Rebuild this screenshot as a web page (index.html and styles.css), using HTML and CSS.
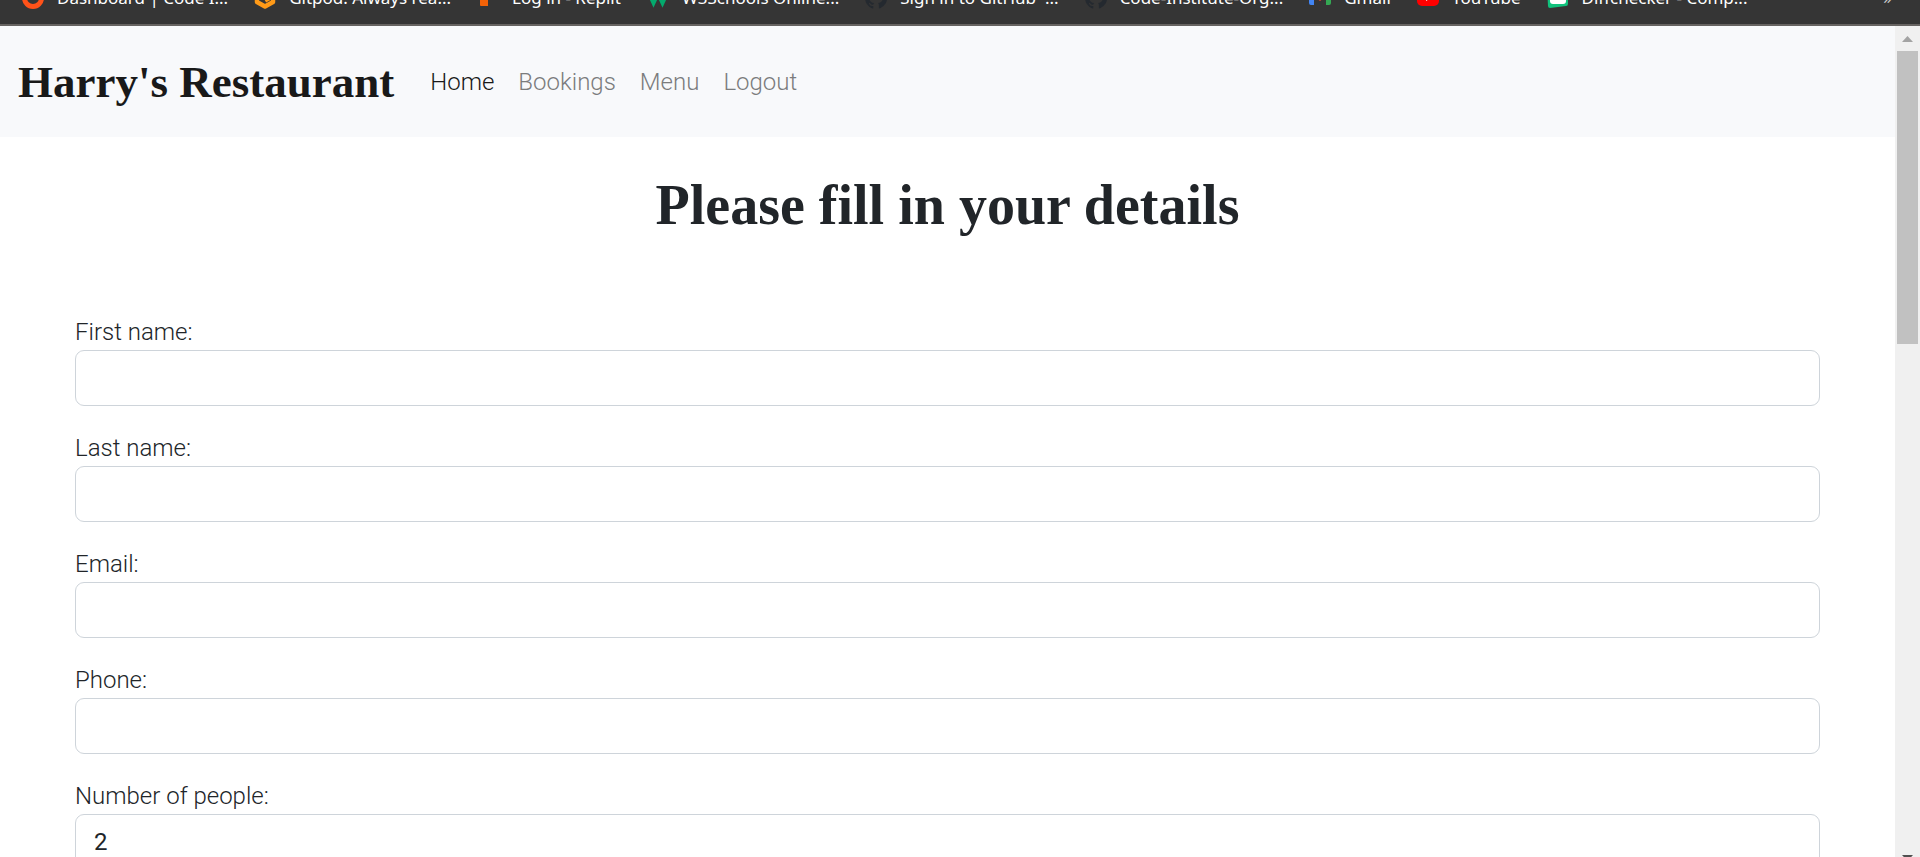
FILE: index.html
```html
<!DOCTYPE html>
<html lang="en">
<head>
<meta charset="utf-8">
<title>Harry's Restaurant</title>
<link rel="stylesheet" href="styles.css">
</head>
<body>
<nav class="bookmarks" aria-label="Bookmarks">
  <a href="#"><svg viewBox="0 0 22 22"><circle cx="11" cy="11" r="8.500" fill="none" stroke="#ff5219" stroke-width="5"/></svg><span>Dashboard | Code I...</span></a>
  <a href="#"><svg viewBox="0 0 22 22"><path d="M12 3 3 8v7l8 4.500 8-4.500V9l-8 4.500" fill="none" stroke="#ff9a17" stroke-width="4.500" stroke-linejoin="round"/></svg><span>Gitpod: Always rea...</span></a>
  <a href="#"><svg viewBox="0 0 22 22"><path d="M3 0h8v6h8v7h-8v6H4q-1 0-1-1z" fill="#f26207"/></svg><span>Log in - Replit</span></a>
  <a href="#"><svg viewBox="0 0 22 22"><path d="m2 6 4.500 10L11 6l4.500 10L20 6" fill="none" stroke="#04aa6d" stroke-width="4"/></svg><span>W3Schools Online...</span></a>
  <a href="#"><svg viewBox="0 0 22 22"><path d="M11 0a11 11 0 0 0-3.500 21.400c.6.100.8-.2.800-.500v-2c-3 .6-3.700-1.300-3.900-1.900-.4-.9-1-1.300-1-1.300 1.700-.3 2.300 1.400 3.100 1.900.7.400 1.400.2 1.900 0 .1-.7.400-1.200.7-1.500-5.800-.8-6-7.200-3.800-8.800.2-1 .1-2 .3-2.900 1 0 2 .5 3 1.200a9 9 0 0 1 5 0c1-.7 2-1.200 3-1.200.3 1 .3 2 .3 2.900 2.300 2 1.800 8-3.800 8.800.5.400.8 1.200.8 2.300v2.500c0 .3.200.6.800.5A11 11 0 0 0 11 0z" fill="#24292f"/></svg><span>Sign in to GitHub ·...</span></a>
  <a href="#"><svg viewBox="0 0 22 22"><path d="M11 0a11 11 0 0 0-3.500 21.400c.6.100.8-.2.800-.500v-2c-3 .6-3.700-1.300-3.900-1.900-.4-.9-1-1.300-1-1.300 1.700-.3 2.300 1.400 3.100 1.900.7.400 1.400.2 1.900 0 .1-.7.400-1.200.7-1.500-5.800-.8-6-7.200-3.800-8.800.2-1 .1-2 .3-2.900 1 0 2 .5 3 1.200a9 9 0 0 1 5 0c1-.7 2-1.200 3-1.200.3 1 .3 2 .3 2.900 2.300 2 1.800 8-3.800 8.800.5.400.8 1.200.8 2.300v2.500c0 .3.200.6.800.5A11 11 0 0 0 11 0z" fill="#24292f"/></svg><span>Code-Institute-Org...</span></a>
  <a href="#"><svg viewBox="0 0 22 22"><path d="M0 3h5v15H2q-2 0-2-2z" fill="#4285f4"/><path d="M17 3h5v13q0 2-2 2h-3z" fill="#34a853"/><path d="m0 2 11 8 11-8v4l-11 8L0 6z" fill="#ea4335"/></svg><span>Gmail</span></a>
  <a href="#"><svg viewBox="0 0 22 22"><rect y="2" width="22" height="17" rx="5" fill="#f00"/><path d="m9 7 6 3.500-6 3.500z" fill="#fff"/></svg><span>YouTube</span></a>
  <a href="#"><svg viewBox="0 0 22 22"><path d="M0 0h21v17q0 2-2 2L3 21q-2 0-2-2z" fill="#10c27c"/><rect x="3" y="1" width="16" height="16" rx="3" fill="#fff"/><path d="M7 8h8v5H7z" fill="#10c27c"/></svg><span>Diffchecker - Comp...</span></a>
  <button class="more" type="button" aria-label="More bookmarks">»</button>
</nav>
<div class="window">
  <div class="page">
    <header class="navbar">
      <a class="brand" href="#">Harry's Restaurant</a>
      <nav class="links" aria-label="Main">
        <a class="active" href="#">Home</a>
        <a href="#">Bookings</a>
        <a href="#">Menu</a>
        <a href="#">Logout</a>
      </nav>
    </header>
    <main>
      <h1>Please fill in your details</h1>
      <form>
        <div class="field"><label for="first">First name:</label><input id="first" type="text"></div>
        <div class="field"><label for="last">Last name:</label><input id="last" type="text"></div>
        <div class="field"><label for="email">Email:</label><input id="email" type="email"></div>
        <div class="field"><label for="phone">Phone:</label><input id="phone" type="tel"></div>
        <div class="field"><label for="people">Number of people:</label><input id="people" type="text" inputmode="numeric" value="2"></div>
      </form>
    </main>
  </div>
  <div class="scrollbar" aria-hidden="true">
    <svg class="arrow" viewBox="0 0 11 6"><path d="M5.500 0 11 6H0z" fill="#a3a3a3"/></svg>
    <div class="thumb"></div>
    <svg class="arrow end" viewBox="0 0 11 6"><path d="M0 0h11L5.500 6z" fill="#505050"/></svg>
  </div>
</div>
</body>
</html>
```
FILE: styles.css
```css
* { box-sizing: border-box; }

body {
  margin: 0;
  height: 100vh;
  display: flex;
  flex-direction: column;
  overflow: hidden;
  background: #fff;
  color: #212529;
  font: 300 24px/36px Roboto, sans-serif;
}

a { color: inherit; text-decoration: none; }

/* Bookmarks strip, cut off by the top edge of the window */
.bookmarks {
  flex: none;
  height: 26px;
  padding: 0 28px 15px 22px;
  display: flex;
  align-items: flex-end;
  gap: 26px;
  overflow: hidden;
  background: #353535;
  border-bottom: 2px solid #666361;
  color: #fff;
  font: 400 17px/22px "Noto Sans", "Open Sans", sans-serif;
  white-space: nowrap;
}
.bookmarks a { display: flex; align-items: center; gap: 13px; }
.bookmarks svg { width: 22px; height: 22px; }
.more {
  margin-left: auto;
  padding: 0;
  border: 0;
  background: none;
  color: #ccc;
  font: inherit;
}

.window { flex: 1; min-height: 0; display: flex; }
.page { flex: 1; min-width: 0; overflow: hidden; }

.navbar {
  display: flex;
  align-items: center;
  gap: 36px;
  padding: 12px 18px;
  background: #f8f9fb;
}
.brand {
  padding: 9px 0 7px;
  color: #191919;
  font: 700 45px/71px "Liberation Serif", serif;
}
.links { display: flex; gap: 24px; color: #7b7c7d; }
.links .active { color: #191919; }

h1 {
  margin: 32px 0 73px;
  text-align: center;
  font: 700 56px/72px "Liberation Serif", serif;
}

form { padding: 0 75px; }
.field { margin-bottom: 24px; }
.field label { display: block; }
.field input {
  display: block;
  width: 100%;
  height: 56px;
  padding: 9px 18px;
  border: 1px solid #ced4da;
  border-radius: 9px;
  background: #fff;
  color: #212529;
  font: 400 24px/36px Roboto, sans-serif;
}

.scrollbar {
  flex: none;
  width: 25px;
  padding: 10px 2px 0;
  display: flex;
  flex-direction: column;
  align-items: center;
  background: #f0f0f0;
  overflow: hidden;
}
.arrow { flex: none; width: 11px; height: 6px; }
.thumb { flex: none; width: 100%; height: 293px; margin-top: 9px; background: #c1c1c1; }
.end { margin: auto 0 -4px; }
```
